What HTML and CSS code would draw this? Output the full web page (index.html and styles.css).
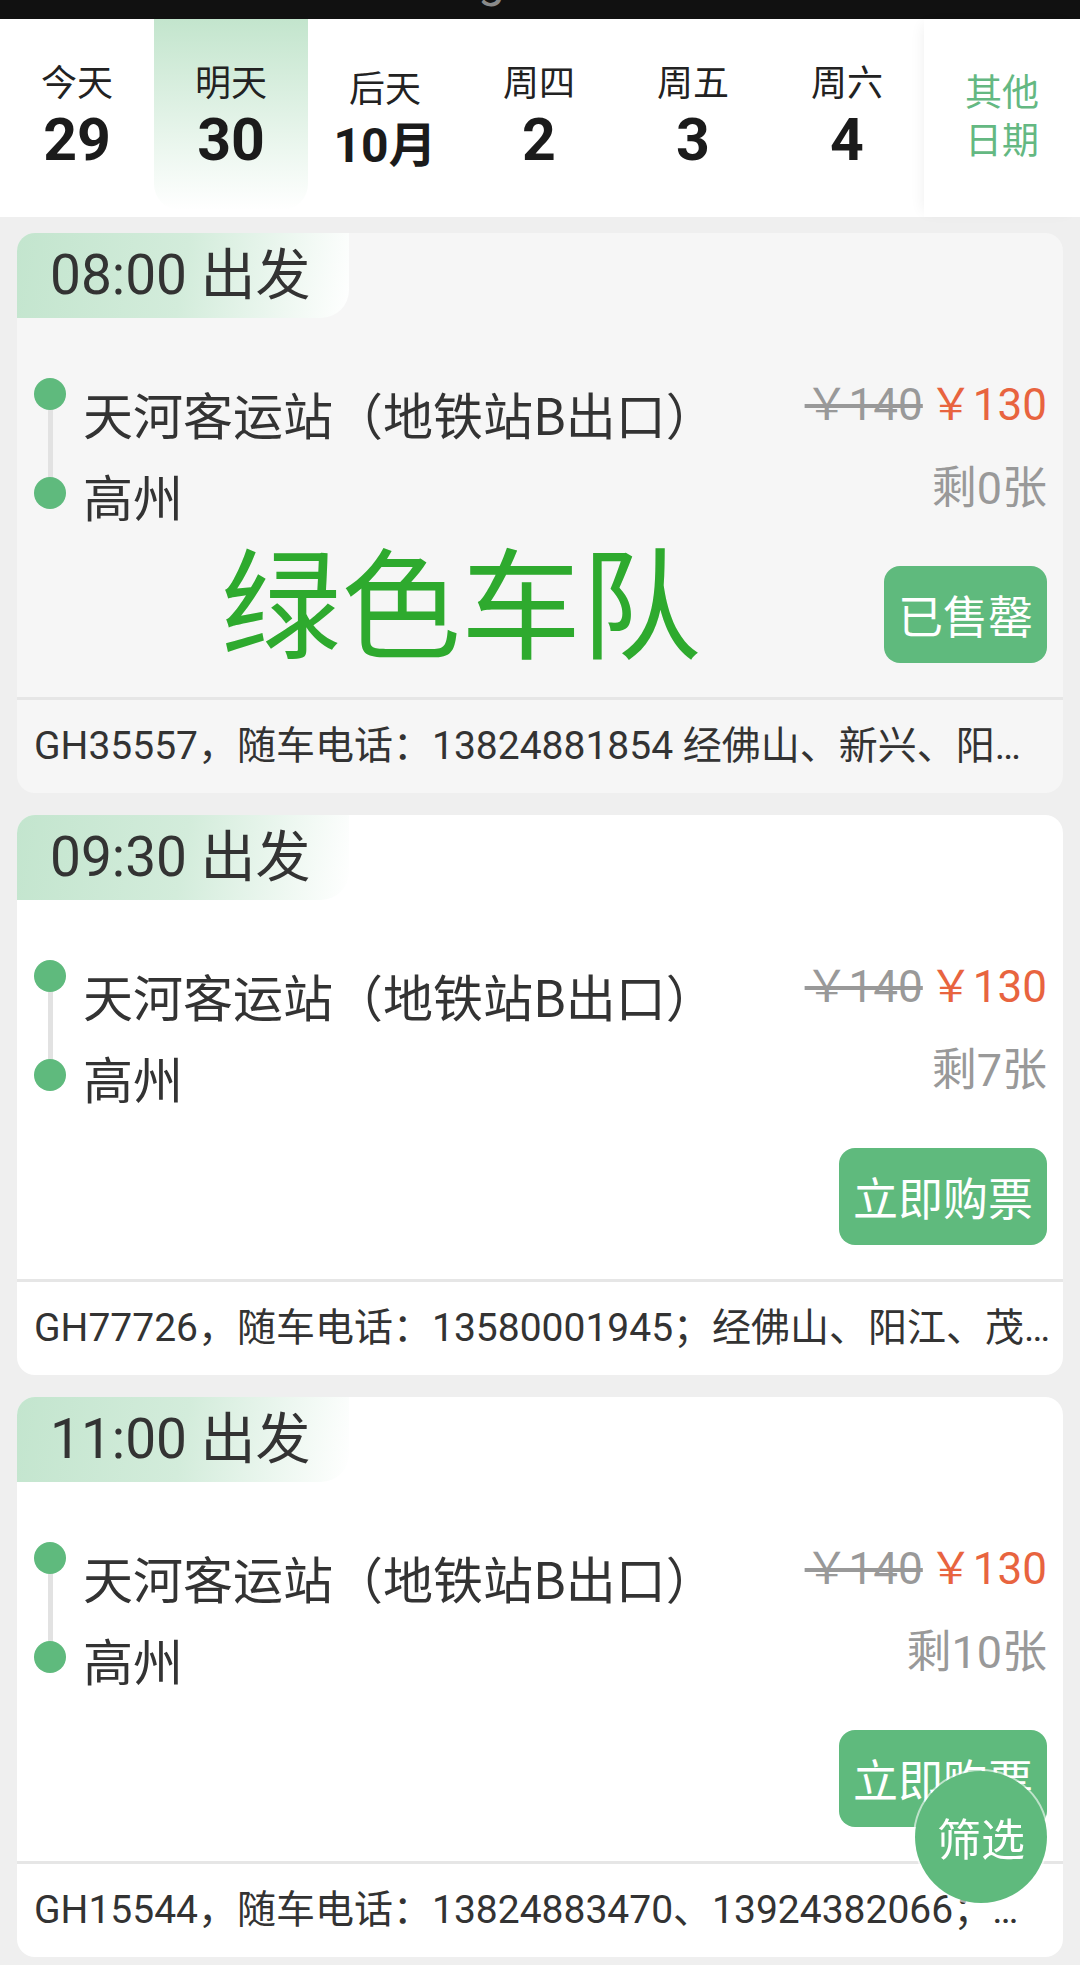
FILE: index.html
```html
<!DOCTYPE html>
<html lang="zh-CN">
	<head>
		<meta charset="UTF-8" />
		<title>班次列表</title>
		<link rel="stylesheet" href="styles.css">
	</head>
	<body>
		<div class="statusbar"><span>g</span></div>

		<!-- 日期选择 -->
		<nav class="datebar">
			<div class="dates">
				<div class="date"><span class="day">今天</span><span class="num">29</span></div>
				<div class="date active"><span class="day">明天</span><span class="num">30</span></div>
				<div class="date late"><span class="day">后天</span><span class="num month">10月</span></div>
				<div class="date"><span class="day">周四</span><span class="num">2</span></div>
				<div class="date"><span class="day">周五</span><span class="num">3</span></div>
				<div class="date"><span class="day">周六</span><span class="num">4</span></div>
			</div>
			<div class="more">其他<br>日期</div>
		</nav>

		<!-- 班次列表 -->
		<main class="list">
			<div class="card soldout">
				<div class="tag">08:00 出发</div>
				<div class="body">
					<div class="route">
						<div class="stop from">天河客运站（地铁站B出口）</div>
						<div class="stop to">高州</div>
					</div>
					<div class="side">
						<div class="price"><s>￥140</s><span class="now">￥130</span></div>
						<div class="left">剩0张</div>
						<button class="buy">已售罄</button>
					</div>
					<div class="stamp">绿色车队</div>
				</div>
				<div class="foot">GH35557，随车电话：13824881854 经佛山、新兴、阳春、阳江、茂名、高州</div>
			</div>

			<div class="card">
				<div class="tag">09:30 出发</div>
				<div class="body">
					<div class="route">
						<div class="stop from">天河客运站（地铁站B出口）</div>
						<div class="stop to">高州</div>
					</div>
					<div class="side">
						<div class="price"><s>￥140</s><span class="now">￥130</span></div>
						<div class="left">剩7张</div>
						<button class="buy">立即购票</button>
					</div>
				</div>
				<div class="foot">GH77726，随车电话：13580001945；经佛山、阳江、茂名、高州</div>
			</div>

			<div class="card">
				<div class="tag">11:00 出发</div>
				<div class="body">
					<div class="route">
						<div class="stop from">天河客运站（地铁站B出口）</div>
						<div class="stop to">高州</div>
					</div>
					<div class="side">
						<div class="price"><s>￥140</s><span class="now">￥130</span></div>
						<div class="left">剩10张</div>
						<button class="buy">立即购票</button>
					</div>
				</div>
				<div class="foot">GH15544，随车电话：13824883470、13924382066；经佛山、阳江、茂名、高州</div>
			</div>
		</main>

		<button class="filter">筛选</button>
	</body>
</html>
```

FILE: styles.css
```css
body {
	margin: 0;
	background: #efefef;
	font-family: Roboto, "Noto Sans CJK SC", sans-serif;
	color: #333;
}
.statusbar {
	height: 19px;
	background: #111;
	overflow: hidden;
}
.statusbar span {
	display: block;
	margin-top: -44px;
	padding-left: 478px;
	font-size: 48px;
	line-height: 48px;
	color: #8a8a8a;
}

/* 日期栏 */
.datebar {
	display: flex;
	height: 198px;
	background: #fff;
}
.dates {
	display: flex;
	width: 924px;
}
.date {
	width: 154px;
	height: 191px;
	box-sizing: border-box;
	padding-top: 39px;
	display: flex;
	flex-direction: column;
	align-items: center;
}
.date.late {
	padding-top: 45px;
}
.date.active {
	background: linear-gradient(#c3e5cd, #fff);
	border-radius: 0 0 26px 26px;
}
.day {
	font-family: "Noto Sans CJK SC", sans-serif;
	font-size: 36px;
	line-height: 44px;
	color: #222;
}
.num {
	margin-top: 6px;
	font-size: 59px;
	line-height: 64px;
	font-weight: 700;
	color: #1b1b1b;
}
.num.month {
	font-size: 48px;
}
.more {
	flex: 1;
	display: flex;
	align-items: center;
	justify-content: center;
	padding-bottom: 8px;
	text-align: center;
	font-family: "Noto Sans CJK SC", sans-serif;
	font-size: 37px;
	line-height: 48px;
	color: #64b882;
	box-shadow: -6px 0 14px -6px rgba(0, 0, 0, 0.07);
}

/* 班次卡片 */
.list {
	padding: 16px 17px 8px;
}
.card {
	position: relative;
	background: #fff;
	border-radius: 18px;
	overflow: hidden;
	margin-bottom: 22px;
}
.card:last-child {
	margin-bottom: 0;
}
.card.soldout {
	background: #f6f6f6;
}
.tag {
	display: inline-block;
	height: 85px;
	line-height: 85px;
	padding: 0 38px 0 33px;
	font-size: 55px;
	color: #333;
	background: linear-gradient(100deg, #c3e5ce 0%, #d3ecdb 50%, #fff 100%);
	border-radius: 0 0 28px 0;
}
.body {
	position: relative;
	display: flex;
	justify-content: space-between;
	align-items: flex-start;
	padding-right: 16px;
}
.route {
	position: relative;
	padding: 54px 0 0 66px;
}
.route::before {
	content: '';
	position: absolute;
	left: 31px;
	top: 76px;
	width: 5px;
	height: 99px;
	background: #e2e2e2;
}
.stop {
	position: relative;
	font-family: "Noto Sans CJK SC", sans-serif;
	font-size: 50px;
	line-height: 82px;
	color: #333;
}
.stop::before {
	content: '';
	position: absolute;
	left: -49px;
	width: 32px;
	height: 32px;
	border-radius: 50%;
	background: #5fba7d;
}
.stop.from::before {
	top: 6px;
}
.stop.to::before {
	top: 23px;
}
.side {
	padding: 59px 0 34px;
	display: flex;
	flex-direction: column;
	align-items: flex-end;
}
.price {
	font-size: 44px;
	line-height: 56px;
	white-space: nowrap;
}
.price s {
	color: #999;
}
.now {
	margin-left: 6px;
	color: #e8643f;
}
.left {
	margin-top: 28px;
	font-size: 45px;
	line-height: 56px;
	color: #999;
}
.buy {
	margin-top: 49px;
	height: 97px;
	padding: 0 14px;
	border: 0;
	border-radius: 16px;
	background: #5fba7d;
	color: #fff;
	font-family: "Noto Sans CJK SC", sans-serif;
	font-size: 45px;
}
.stamp {
	position: absolute;
	left: 204px;
	top: 220px;
	font-family: "Noto Sans CJK SC", sans-serif;
	font-size: 120px;
	line-height: 120px;
	color: #2eaa2e;
}
.foot {
	border-top: 3px solid #e6e6e6;
	height: 93px;
	line-height: 93px;
	padding: 0 12px 0 17px;
	font-size: 39px;
	color: #333;
	white-space: nowrap;
	overflow: hidden;
	text-overflow: ellipsis;
}

/* 筛选按钮 */
.filter {
	position: fixed;
	right: 33px;
	bottom: 62px;
	width: 132px;
	height: 132px;
	border: 0;
	border-radius: 50%;
	background: #5fba7d;
	color: #fff;
	font-family: "Noto Sans CJK SC", sans-serif;
	font-size: 44px;
	box-shadow: 0 0 0 2px rgba(255, 255, 255, 0.6);
}
```
